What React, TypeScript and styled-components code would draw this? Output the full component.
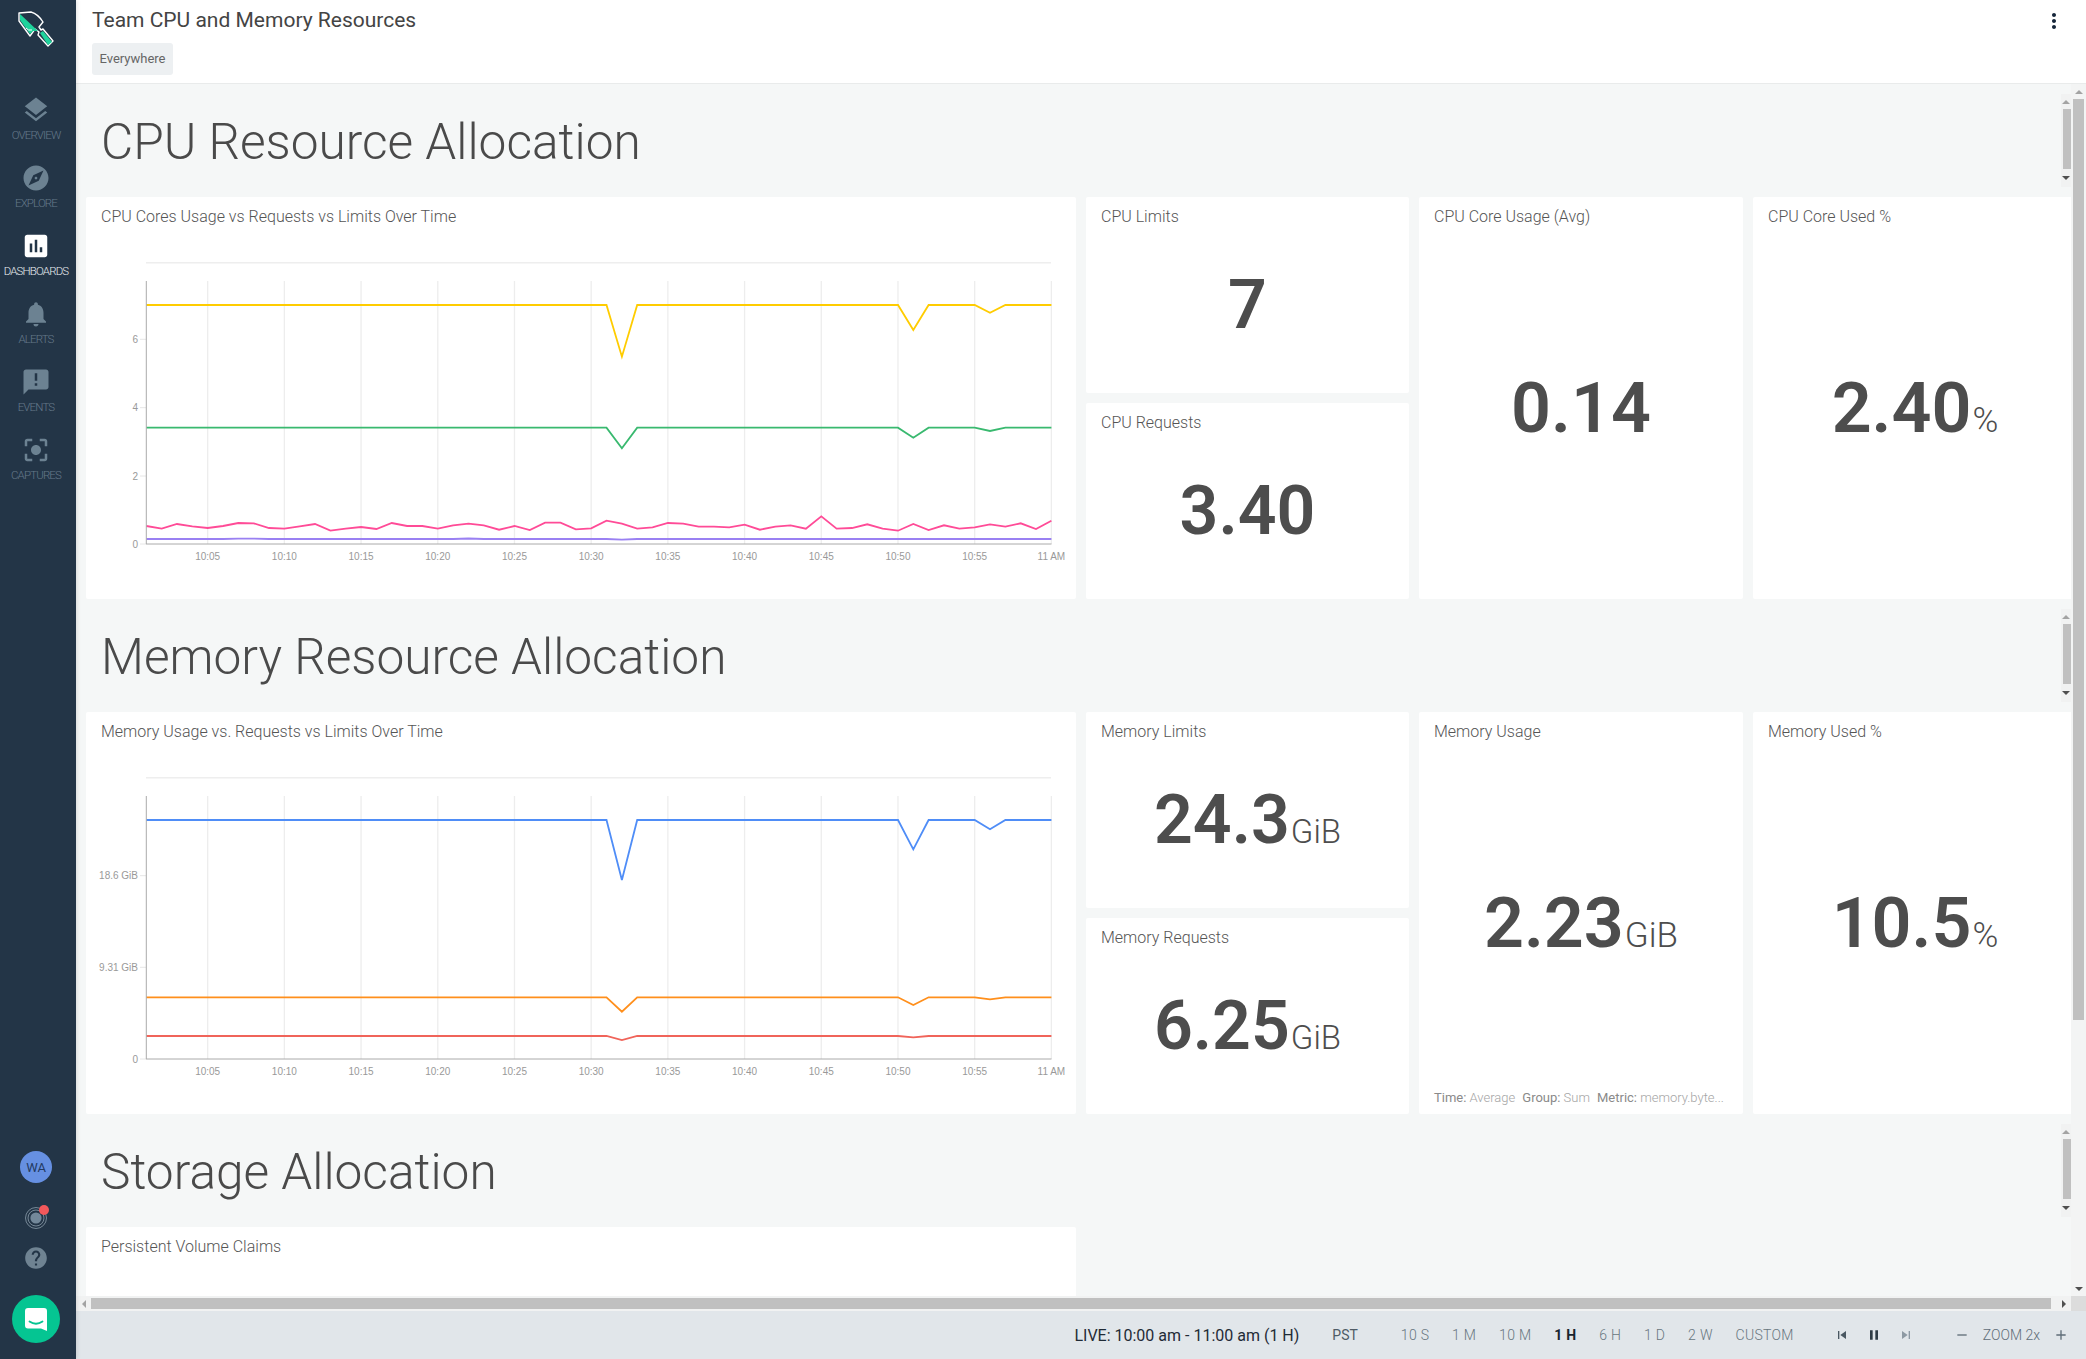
import React from "react";
import styled, { createGlobalStyle } from "styled-components";
import {
  MdLayers,
  MdExplore,
  MdAssessment,
  MdNotifications,
  MdAnnouncement,
  MdCenterFocusStrong,
  MdHelp,
  MdMoreVert,
  MdSkipPrevious,
  MdSkipNext,
  MdPause,
  MdRemove,
  MdAdd,
} from "react-icons/md";

const GlobalStyle = createGlobalStyle`
  html, body {
    margin: 0;
    padding: 0;
    height: 100%;
    overflow: hidden;
    font-family: Roboto, "Liberation Sans", sans-serif;
  }
`;

const Page = styled.div`
  display: flex;
  width: 100vw;
  height: 100vh;
  overflow: hidden;
  background: #f5f7f7;
`;

const Sidebar = styled.aside`
  display: flex;
  flex-direction: column;
  align-items: center;
  flex: 0 0 76px;
  min-width: 0;
  box-sizing: border-box;
  padding-right: 4px;
  background: #233547;
  box-shadow: 1px 0 4px rgba(0, 0, 0, 0.12);
  z-index: 2;
`;

const LogoWrap = styled.div`
  height: 95px;
  width: 72px;
`;

const NavItem = styled.div<{ $active?: boolean }>`
  display: flex;
  flex-direction: column;
  align-items: center;
  height: 68px;
  font-size: 11.5px;
  font-weight: 300;
  letter-spacing: -0.85px;
  line-height: 14px;
  color: ${(p) => (p.$active ? "#e6ebef" : "#65798a")};

  svg {
    display: block;
    margin-bottom: 3px;
    color: ${(p) => (p.$active ? "#ffffff" : "#6c8292")};
  }
`;

const SideBottom = styled.div`
  display: flex;
  flex-direction: column;
  align-items: center;
  margin-top: auto;
  padding-bottom: 16px;
`;

const Avatar = styled.div`
  display: flex;
  align-items: center;
  justify-content: center;
  width: 32px;
  height: 32px;
  border-radius: 50%;
  background: #6690e2;
  color: #233a63;
  font-size: 13px;
`;

const RadarWrap = styled.div`
  position: relative;
  width: 22px;
  height: 22px;
  margin-top: 24px;

  svg {
    display: block;
  }
`;

const RedDot = styled.span`
  position: absolute;
  top: -2px;
  right: -2px;
  width: 10px;
  height: 10px;
  border-radius: 50%;
  background: #f2585b;
`;

const HelpWrap = styled.div`
  height: 26px;
  margin-top: 16px;
  color: #6f8392;

  svg {
    display: block;
  }
`;

const ChatButton = styled.div`
  display: flex;
  align-items: center;
  justify-content: center;
  width: 48px;
  height: 48px;
  margin-top: 24px;
  border-radius: 50%;
  background: #05c592;
`;

const Main = styled.main`
  display: flex;
  flex-direction: column;
  flex: 1;
  min-width: 0;
`;

const Header = styled.header`
  display: flex;
  justify-content: space-between;
  flex: 0 0 84px;
  box-sizing: border-box;
  padding: 9px 20px 0 16px;
  background: #fff;
  border-bottom: 1px solid #e9ebeb;
`;

const PageTitle = styled.h1`
  margin: 0 0 11px;
  font-size: 21px;
  font-weight: 400;
  line-height: 23px;
  color: #444;
`;

const Tag = styled.span`
  display: inline-block;
  padding: 0 7.5px;
  border-radius: 3px;
  background: #edf0f2;
  font-size: 13px;
  font-weight: 400;
  line-height: 32px;
  color: #666;
`;

const MoreButton = styled.div`
  color: #16263a;
  height: 24px;
`;

const Body = styled.div`
  display: flex;
  flex: 1;
  min-height: 0;
`;

const ScrollArea = styled.div`
  display: flex;
  flex-direction: column;
  gap: 10px;
  flex: 1;
  min-width: 0;
  padding: 10px 0 0 10px;
  overflow: hidden;
`;

const SectionHead = styled.div`
  display: flex;
  justify-content: space-between;
  height: 93px;
  margin-bottom: 10px;
`;

const SectionTitle = styled.h2`
  margin: 0;
  padding-left: 15px;
  font-size: 49.6px;
  font-weight: 300;
  line-height: 96px;
  color: #4a4a4a;
`;

const MiniBar = styled.div`
  display: flex;
  flex-direction: column;
  align-items: flex-end;
  flex: 0 0 10px;
  background: #f1f2f2;
`;

const MiniThumb = styled.div`
  width: 8px;
  height: 60px;
  background: #c0c0c0;
`;

const ArrowSlot = styled.div<{ $size: number; $long?: number }>`
  display: flex;
  align-items: center;
  justify-content: center;
  flex: 0 0 ${(p) => p.$long ?? p.$size}px;
  width: ${(p) => p.$size}px;
`;

const Arrow = styled.span<{ $dir: "up" | "down" | "left" | "right"; $dark?: boolean }>`
  width: 0;
  height: 0;
  border: 4px solid transparent;
  ${(p) => {
    const color = p.$dark ? "#505050" : "#a3a3a3";
    if (p.$dir === "up") return `border-bottom-color: ${color}; border-top-width: 0;`;
    if (p.$dir === "down") return `border-top-color: ${color}; border-bottom-width: 0;`;
    if (p.$dir === "left") return `border-right-color: ${color}; border-left-width: 0;`;
    return `border-left-color: ${color}; border-right-width: 0;`;
  }}
`;

const CardGrid = styled.div`
  display: grid;
  grid-template-columns: 990px 323px 324px 324px;
  gap: 10px;
  height: 402px;
`;

const Card = styled.div`
  position: relative;
  display: flex;
  flex-direction: column;
  box-sizing: border-box;
  min-height: 0;
  border-radius: 2px;
  background: #fff;
  padding-bottom: 19px;
`;

const ChartCard = styled(Card)`
  padding-bottom: 0;
`;

const CardTitle = styled.div`
  flex: 0 0 38px;
  box-sizing: border-box;
  padding: 9.5px 15px 0;
  font-size: 16px;
  font-weight: 300;
  line-height: 19px;
  color: #555;
`;

const StatStack = styled.div`
  display: grid;
  grid-template-rows: 1fr 1fr;
  gap: 10px;
  min-height: 0;
`;

const StatBody = styled.div`
  display: flex;
  align-items: center;
  justify-content: center;
  flex: 1;
`;

const StatValue = styled.span<{ $tall?: boolean }>`
  font-size: ${(p) => (p.$tall ? 70 : 68)}px;
  font-weight: 600;
  line-height: 80px;
  color: #4d4d4d;
`;

const StatUnit = styled.span<{ $tall?: boolean }>`
  margin-left: 1px;
  font-size: ${(p) => (p.$tall ? 35 : 33)}px;
  font-weight: 300;
  line-height: 1;
  color: #4d4d4d;
`;

const Footnote = styled.div`
  position: absolute;
  left: 15px;
  right: 15px;
  bottom: 8px;
  display: flex;
  gap: 7px;
  font-size: 13px;
  font-weight: 300;
  line-height: 16px;
  color: #a5a5a5;
  white-space: nowrap;

  b {
    font-weight: 400;
    color: #8a8a8a;
  }
`;

const ChartSvg = styled.svg`
  display: block;
  margin-top: 15px;
  overflow: visible;

  text {
    font-family: "Liberation Sans", Arial, sans-serif;
    font-size: 10px;
    fill: #999;
  }
`;

const VBar = styled.div`
  display: flex;
  flex-direction: column;
  align-items: center;
  flex: 0 0 15px;
  background: #f3f4f4;
`;

const VThumb = styled.div`
  width: 11px;
  height: 921px;
  background: #c0c0c0;
`;

const VFill = styled.div`
  flex: 1;
`;

const HBar = styled.div`
  display: flex;
  align-items: center;
  flex: 0 0 15px;
  background: #f1f2f2;
`;

const HThumb = styled.div`
  flex: 0 0 1960px;
  height: 11px;
  background: #c0c0c0;
`;

const HFill = styled.div`
  flex: 1;
`;

const Corner = styled.div`
  flex: 0 0 15px;
  height: 15px;
  background: #dcdcdc;
`;

const Footer = styled.footer`
  display: flex;
  align-items: center;
  justify-content: flex-end;
  flex: 0 0 48px;
  padding-right: 17px;
  background: #e1e6ea;
  font-size: 14px;
  font-weight: 300;
  color: #5f6d78;
`;

const LiveRange = styled.span`
  font-size: 16px;
  font-weight: 400;
  color: #1f2b36;
`;

const Zone = styled.span`
  margin: 0 43px 0 33px;
  color: #4f5c66;
  font-weight: 400;
`;

const RangeList = styled.div`
  display: flex;
  gap: 22.8px;
  margin-right: 40px;
`;

const RangeItem = styled.span<{ $active?: boolean }>`
  letter-spacing: 0.3px;
  font-weight: ${(p) => (p.$active ? 700 : 300)};
  color: ${(p) => (p.$active ? "#1a2530" : "#687680")};
`;

const Transport = styled.div`
  display: flex;
  align-items: center;
  gap: 16px;
  margin-right: 40px;
`;

const TransportIcon = styled.span<{ $tone: string }>`
  display: flex;
  color: ${(p) => p.$tone};
`;

const ZoomGroup = styled.div`
  display: flex;
  align-items: center;
  gap: 13px;
`;

const Shovel = () => (
  <svg width="76" height="70" viewBox="0 0 76 70">
    <path
      d="M19 13 L31 12 Q38 14 43 22 L39 27 L41 30 L43 29 L53 41 L48 46 L38 35 L39 32 L35 29 L30 36 L19 21 Z"
      fill="#233547"
      stroke="#fff"
      strokeWidth="1.4"
      strokeLinejoin="round"
    />
    <path d="M20 14 L38 31 L33 31 L30 34 L20 20 Z" fill="#1fd39c" />
    <path d="M26 28 Q28 31 32 30" fill="none" stroke="#fff" strokeWidth="1" />
    <path d="M40 33 L43 31 L52 42 L48 45 Z" fill="#1fd39c" />
  </svg>
);

const RadarIcon = () => (
  <svg width="22" height="22" viewBox="0 0 22 22" fill="none">
    <circle cx="11" cy="11" r="10.5" stroke="#8b9dab" strokeWidth="0.8" />
    <circle cx="11" cy="11" r="8" stroke="#8b9dab" strokeWidth="0.8" />
    <circle cx="11" cy="11" r="5.6" fill="#73889a" />
  </svg>
);

const ChatIcon = () => (
  <svg width="24" height="25" viewBox="0 0 24 25">
    <path
      d="M4 1 H20 Q23 1 23 4 V24 L17 21.5 H4 Q1 21.5 1 18.5 V4 Q1 1 4 1 Z"
      fill="#fff"
    />
    <path
      d="M5.5 14.5 Q12 19 18.5 14.5"
      fill="none"
      stroke="#05c592"
      strokeWidth="1.8"
      strokeLinecap="round"
    />
  </svg>
);

const navItems = [
  { label: "OVERVIEW", Icon: MdLayers },
  { label: "EXPLORE", Icon: MdExplore },
  { label: "DASHBOARDS", Icon: MdAssessment, active: true },
  { label: "ALERTS", Icon: MdNotifications },
  { label: "EVENTS", Icon: MdAnnouncement },
  { label: "CAPTURES", Icon: MdCenterFocusStrong },
];

// chart coordinates are the pixel positions of the first section, the second one shares them
const xAt = (minute: number) => 130.97 + 15.34 * minute;

const flat = (base: number, dips: Record<number, number>) =>
  Array.from({ length: 60 }, (_, i) => dips[i + 1] ?? base);

const pinkRaw = [
  888, 896, 882, 889, 894, 888, 879, 880, 894, 896, 889, 882, 902, 896, 891, 897, 879, 888, 888,
  896, 886, 881, 886, 899, 888, 900, 878, 878, 898, 895, 872, 881, 896, 892, 879, 881, 890, 890,
  892, 884, 899, 890, 886, 896, 859, 896, 894, 883, 896, 902, 882, 900, 886, 896, 892, 883, 890,
  880, 897, 872,
];

const cpuSeries = [
  { color: "#ffcc00", ys: flat(305, { 32: 356.7, 51: 330, 56: 312.7 }) },
  { color: "#39b96f", ys: flat(427.7, { 32: 448.3, 51: 437.7, 56: 431 }) },
  { color: "#ff4b97", ys: pinkRaw.map((z) => 230 + z / 3) },
  { color: "#9a80f2", ys: flat(539, { 7: 538.6, 8: 538.6, 22: 538.5, 32: 539.6 }) },
];

const memorySeries = [
  { color: "#4f8df7", ys: flat(305, { 32: 365, 51: 334.3, 56: 314.3 }) },
  { color: "#ff8f1c", ys: flat(482.3, { 32: 496.7, 51: 490, 56: 484.3 }) },
  { color: "#f0645a", ys: flat(521, { 32: 525, 51: 522.3 }) },
];

const timeTicks = [
  "10:05", "10:10", "10:15", "10:20", "10:25", "10:30",
  "10:35", "10:40", "10:45", "10:50", "10:55", "11 AM",
];

type Series = { color: string; ys: number[] };

const LineChart = ({ series, yTicks }: { series: Series[]; yTicks: { y: number; label: string }[] }) => (
  <ChartSvg width="990" height="349" viewBox="86 250 990 349">
    <line x1="146" y1="262.7" x2="1051" y2="262.7" stroke="#eeeeee" strokeWidth="1.6" />
    {timeTicks.map((label, i) => {
      const x = xAt((i + 1) * 5);
      return (
        <g key={label}>
          <line x1={x} y1="281" x2={x} y2="544" stroke="#ededed" strokeWidth="1.3" />
          <text x={x} y="559.5" textAnchor="middle">
            {label}
          </text>
        </g>
      );
    })}
    {yTicks.map((tick) => (
      <g key={tick.label}>
        <line x1="140" y1={tick.y} x2="146" y2={tick.y} stroke="#e6e6e6" />
        <text x="138" y={tick.y + 3.5} textAnchor="end">
          {tick.label}
        </text>
      </g>
    ))}
    {series.map((s) => (
      <polyline
        key={s.color}
        points={s.ys.map((y, i) => `${xAt(i + 1).toFixed(1)},${y.toFixed(1)}`).join(" ")}
        fill="none"
        stroke={s.color}
        strokeWidth="1.8"
      />
    ))}
    <line x1="146.3" y1="281" x2="146.3" y2="544" stroke="#aaaaaa" />
    <line x1="146" y1="544" x2="1051.5" y2="544" stroke="#aaaaaa" />
  </ChartSvg>
);

type StatProps = { title: string; value: string; unit?: string; note?: boolean; tall?: boolean };

const Stat = ({ title, value, unit, note, tall }: StatProps) => (
  <Card>
    <CardTitle>{title}</CardTitle>
    <StatBody>
      <StatValue $tall={tall}>
        {value}
        {unit && <StatUnit $tall={tall}>{unit}</StatUnit>}
      </StatValue>
    </StatBody>
    {note && (
      <Footnote>
        <span>
          <b>Time:</b> Average
        </span>
        <span>
          <b>Group:</b> Sum
        </span>
        <span>
          <b>Metric:</b> memory.byte...
        </span>
      </Footnote>
    )}
  </Card>
);

const SectionHeading = ({ title }: { title: string }) => (
  <SectionHead>
    <SectionTitle>{title}</SectionTitle>
    <MiniBar>
      <ArrowSlot $size={10} $long={15}>
        <Arrow $dir="up" />
      </ArrowSlot>
      <MiniThumb />
      <ArrowSlot $size={10} $long={18}>
        <Arrow $dir="down" $dark />
      </ArrowSlot>
    </MiniBar>
  </SectionHead>
);

const App = () => {
  return (
    <Page>
      <GlobalStyle />
      <Sidebar>
        <LogoWrap>
          <Shovel />
        </LogoWrap>
        {navItems.map(({ label, Icon, active }) => (
          <NavItem key={label} $active={active}>
            <Icon size={30} />
            {label}
          </NavItem>
        ))}
        <SideBottom>
          <Avatar>WA</Avatar>
          <RadarWrap>
            <RadarIcon />
            <RedDot />
          </RadarWrap>
          <HelpWrap>
            <MdHelp size={26} />
          </HelpWrap>
          <ChatButton>
            <ChatIcon />
          </ChatButton>
        </SideBottom>
      </Sidebar>
      <Main>
        <Header>
          <div>
            <PageTitle>Team CPU and Memory Resources</PageTitle>
            <Tag>Everywhere</Tag>
          </div>
          <MoreButton>
            <MdMoreVert size={24} />
          </MoreButton>
        </Header>
        <Body>
          <ScrollArea>
            <div>
              <SectionHeading title="CPU Resource Allocation" />
              <CardGrid>
                <ChartCard>
                  <CardTitle>CPU Cores Usage vs Requests vs Limits Over Time</CardTitle>
                  <LineChart
                    series={cpuSeries}
                    yTicks={[
                      { y: 339.3, label: "6" },
                      { y: 407.7, label: "4" },
                      { y: 476, label: "2" },
                      { y: 544, label: "0" },
                    ]}
                  />
                </ChartCard>
                <StatStack>
                  <Stat title="CPU Limits" value="7" />
                  <Stat title="CPU Requests" value="3.40" />
                </StatStack>
                <Stat title="CPU Core Usage (Avg)" value="0.14" tall />
                <Stat title="CPU Core Used %" value="2.40" unit="%" tall />
              </CardGrid>
            </div>
            <div>
              <SectionHeading title="Memory Resource Allocation" />
              <CardGrid>
                <ChartCard>
                  <CardTitle>Memory Usage vs. Requests vs Limits Over Time</CardTitle>
                  <LineChart
                    series={memorySeries}
                    yTicks={[
                      { y: 360.7, label: "18.6 GiB" },
                      { y: 452.3, label: "9.31 GiB" },
                      { y: 544, label: "0" },
                    ]}
                  />
                </ChartCard>
                <StatStack>
                  <Stat title="Memory Limits" value="24.3" unit="GiB" />
                  <Stat title="Memory Requests" value="6.25" unit="GiB" />
                </StatStack>
                <Stat title="Memory Usage" value="2.23" unit="GiB" note tall />
                <Stat title="Memory Used %" value="10.5" unit="%" tall />
              </CardGrid>
            </div>
            <div>
              <SectionHeading title="Storage Allocation" />
              <CardGrid>
                <Card>
                  <CardTitle>Persistent Volume Claims</CardTitle>
                </Card>
              </CardGrid>
            </div>
          </ScrollArea>
          <VBar>
            <ArrowSlot $size={15}>
              <Arrow $dir="up" />
            </ArrowSlot>
            <VThumb />
            <VFill />
            <ArrowSlot $size={15}>
              <Arrow $dir="down" $dark />
            </ArrowSlot>
          </VBar>
        </Body>
        <HBar>
          <ArrowSlot $size={15}>
            <Arrow $dir="left" />
          </ArrowSlot>
          <HThumb />
          <HFill />
          <ArrowSlot $size={15}>
            <Arrow $dir="right" $dark />
          </ArrowSlot>
          <Corner />
        </HBar>
        <Footer>
          <LiveRange>LIVE: 10:00 am - 11:00 am (1 H)</LiveRange>
          <Zone>PST</Zone>
          <RangeList>
            <RangeItem>10 S</RangeItem>
            <RangeItem>1 M</RangeItem>
            <RangeItem>10 M</RangeItem>
            <RangeItem $active>1 H</RangeItem>
            <RangeItem>6 H</RangeItem>
            <RangeItem>1 D</RangeItem>
            <RangeItem>2 W</RangeItem>
            <RangeItem>CUSTOM</RangeItem>
          </RangeList>
          <Transport>
            <TransportIcon $tone="#4a5862">
              <MdSkipPrevious size={16} />
            </TransportIcon>
            <TransportIcon $tone="#2f3c46">
              <MdPause size={16} />
            </TransportIcon>
            <TransportIcon $tone="#8d99a3">
              <MdSkipNext size={16} />
            </TransportIcon>
          </Transport>
          <ZoomGroup>
            <MdRemove size={16} />
            <span>ZOOM 2x</span>
            <MdAdd size={16} />
          </ZoomGroup>
        </Footer>
      </Main>
    </Page>
  );
};

export default App;
